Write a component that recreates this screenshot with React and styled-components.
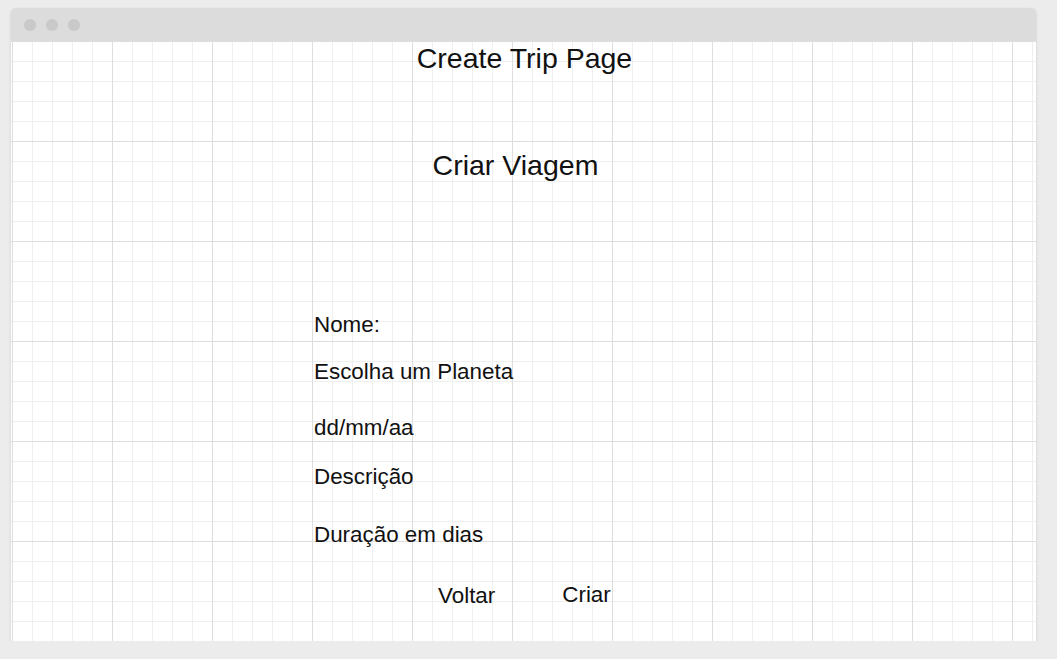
import React from "react";
import styled, { createGlobalStyle } from "styled-components";

const GlobalStyle = createGlobalStyle`
  body {
    margin: 0;
    background: #ececec;
    font-family: "Liberation Sans", Arial, sans-serif;
  }
`;

// browser-like frame
const Window = styled.div`
  margin: 8px 0 0 11px;
  width: 1025px;
  height: 633px;
  border-radius: 5px 5px 0 0;
  overflow: hidden;
  box-shadow: 0 1px 3px rgba(0, 0, 0, 0.15);
  display: flex;
  flex-direction: column;
`;

const TitleBar = styled.div`
  height: 33px;
  flex-shrink: 0;
  background: #dcdcdc;
  display: flex;
  align-items: center;
  gap: 10px;
  padding-left: 13px;
`;

const Dot = styled.span`
  width: 12px;
  height: 12px;
  border-radius: 50%;
  background: #c9c9c9;
`;

const Canvas = styled.div`
  flex: 1;
  background-color: #fff;
  background-image:
    linear-gradient(to right, #dedede 1px, transparent 1px),
    linear-gradient(to bottom, #dedede 1px, transparent 1px),
    linear-gradient(to right, #efefef 1px, transparent 1px),
    linear-gradient(to bottom, #efefef 1px, transparent 1px);
  background-size: 100px 100px, 100px 100px, 20px 20px, 20px 20px;
  background-position: 1px 0, 1px 0, 1px 0, 1px 0;
  color: #111;
  display: flex;
  flex-direction: column;
`;

const PageTitle = styled.h1`
  margin: 1px 0 0;
  padding-left: 2px;
  font-size: 28.5px;
  font-weight: normal;
  line-height: 32px;
  text-align: center;
`;

const Heading = styled.h2`
  margin: 75px 0 0;
  padding-right: ${(p) => p.$shift || 0}px;
  font-size: 28.5px;
  font-weight: normal;
  line-height: 32px;
  text-align: center;
`;

const Form = styled.form`
  margin: 130px 0 0 303px;
  display: flex;
  flex-direction: column;
`;

const Field = styled.label`
  height: 28px;
  margin-top: ${(p) => p.$gap || 0}px;
  display: flex;
  align-items: center;
  font-size: 22.4px;
`;

const Actions = styled.div`
  margin-top: 32px;
  padding-left: 124px;
  display: flex;
  gap: 67px;
  height: 28px;
  align-items: center;
`;

const TextButton = styled.button`
  border: none;
  background: none;
  padding: 0;
  margin-top: ${(p) => p.$dy || 0}px;
  font-family: inherit;
  font-size: 22.4px;
  color: #111;
  cursor: pointer;
`;

export default function App() {
  return (
    <>
      <GlobalStyle />
      <Window>
        <TitleBar>
          <Dot />
          <Dot />
          <Dot />
        </TitleBar>
        <Canvas>
          <PageTitle>Create Trip Page</PageTitle>
          <Heading $shift={16}>Criar Viagem</Heading>
          <Form onSubmit={(e) => e.preventDefault()}>
            <Field>Nome:</Field>
            <Field $gap={19}>Escolha um Planeta</Field>
            <Field $gap={28}>dd/mm/aa</Field>
            <Field $gap={21}>Descrição</Field>
            <Field $gap={30}>Duração em dias</Field>
            <Actions>
              <TextButton type="button" $dy={2}>Voltar</TextButton>
              <TextButton type="submit">Criar</TextButton>
            </Actions>
          </Form>
        </Canvas>
      </Window>
    </>
  );
}
